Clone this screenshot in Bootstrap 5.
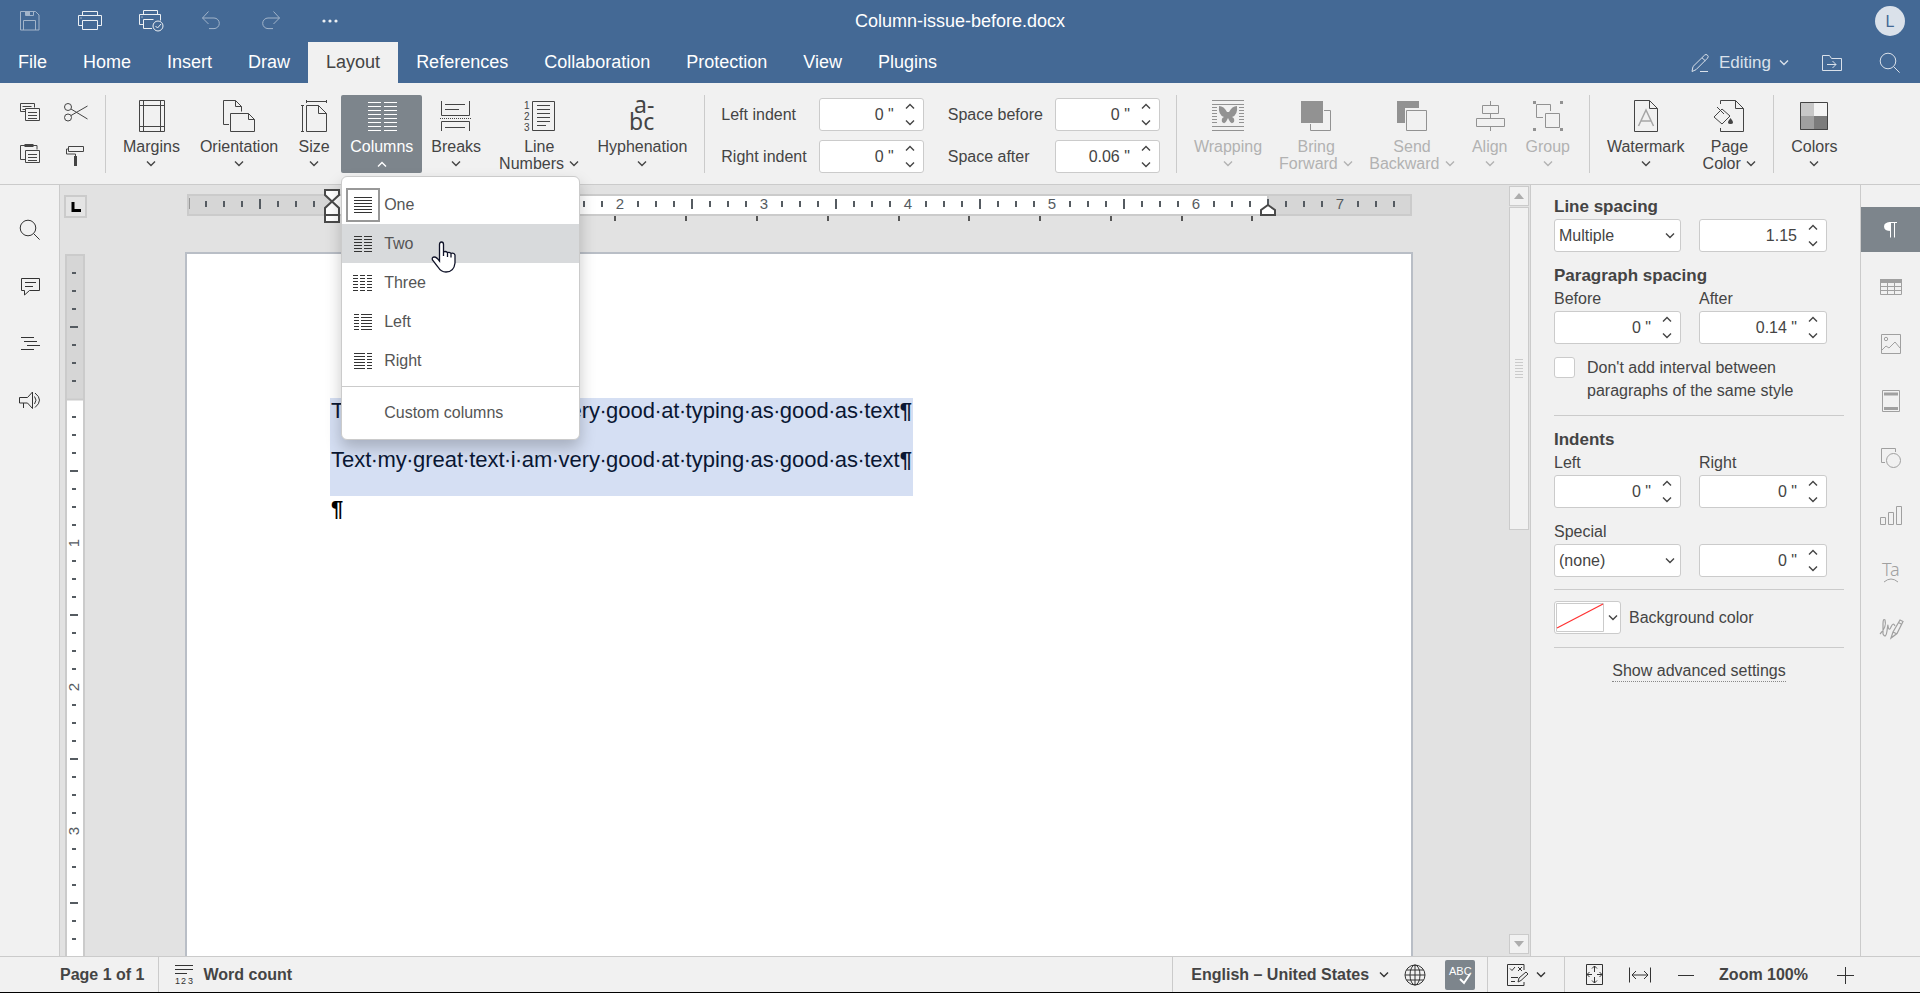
<!DOCTYPE html>
<html lang="en">
<head>
<meta charset="utf-8">
<meta name="viewport" content="width=device-width, initial-scale=1">
<title>Column-issue-before.docx</title>
<link href="https://cdn.jsdelivr.net/npm/bootstrap@5.3.0/dist/css/bootstrap.min.css" rel="stylesheet">
<style>
:root{--head:#446995;--bar:#f1f1f1;--line:#cbcbcb;--canvas:#e2e2e2;--on:#7d858c;--ink:#444}
body{font-family:"Liberation Sans",Arial,sans-serif;font-size:16px;line-height:17px;color:var(--ink);background:var(--bar)}
svg{display:block;flex:none;fill:none;stroke:currentColor}
.solid{fill:currentColor;stroke:none}
button{color:inherit;background:none;border:0;padding:0;font:inherit}
.head{background:var(--head);color:#fff}
.head-top{height:42px;padding-left:20px}
.head-top button{width:24px;height:24px}
.head-top button:first-child{width:21px}
.quick{gap:37px}
.doc-title{font-size:18px;line-height:22px;left:0;right:0}
.avatar{width:30px;height:30px;background:#dae1ea;color:var(--head);margin-right:15px}
.tabs{height:41px;font-size:18px;line-height:22px}
.tabs a{color:#fff;padding:9px 18px 10px;text-decoration:none}
.tabs a.on{background:var(--bar);color:var(--ink)}
.head-tools{color:#dae1ea;margin-right:19px}
.mode{font-size:17px}
.ribbon{height:102px;border-bottom:1px solid var(--line);padding:12px 0 10px}
.clip{display:grid;grid-template-columns:24px 24px;grid-template-rows:24px 24px;column-gap:20px;row-gap:18px;margin:5px 17px 0 20px;align-content:start}
.vsep{width:1px;height:78px;background:var(--line);flex:none}
.tool{height:78px;padding:4px 9px 0;border-radius:2px;display:flex;flex-direction:column;align-items:center}
.tool.tight{padding:4px 8px 0}
.gapped{margin-right:2px}
.tool svg.pic{margin-bottom:5px}
.tool .chev{margin:6px auto}
.tool span .chev{display:inline-block;margin:0 0 2px 1px}
.tool.on{background:var(--on);color:#fff}
.tool:disabled{color:#b2b2b2}
.tool:disabled .pic{color:#929292}
.spins{display:grid;grid-template-columns:auto auto;gap:9px 12px;padding-top:3px;align-items:center;align-content:start}
.spin{height:33px;background:#fff;border:1px solid var(--line);border-radius:3px;display:flex;align-items:center}
.spin input{border:0;background:none;flex:1;min-width:0;width:40px;text-align:right;padding:0;color:inherit}
.spin span{display:flex;flex-direction:column;gap:11px;margin:0 8px 0 11px}
.ribbon .spin{width:105px}
.menu{top:81px;left:0;width:239px;background:#fff;border:1px solid var(--line);border-radius:6px;padding:8px 0 7px;box-shadow:0 8px 16px rgba(0,0,0,.22);z-index:5;color:#555;text-align:left}
.menu button{display:flex;align-items:center;width:100%;height:39px;padding-left:4px;position:relative}
.menu i{width:34px;height:34px;display:grid;place-items:center;margin-right:4px;color:#333}
.menu i.picked{border:2px solid #989898}
.menu .hot{background:#d8dadc}
.menu hr{margin:6px 0;border:0;border-top:1px solid var(--line);opacity:1}
.pointer{left:88px;top:16px;color:#0f1228}
.rail{padding-top:22px;gap:12px}
.rail button{height:45px;width:100%;display:grid;place-items:center}
.rail-left{width:60px;border-right:1px solid var(--line);color:#333}
.rail-right{width:60px;border-left:1px solid var(--line);color:#a0a0a0}
.rail-right .on{background:var(--on);color:#fff}
.canvas{background:var(--canvas)}
.vcol{width:29px}
.tabmark{width:23px;height:23px;border:2px solid var(--line);background:#e4e4e4;margin:10px 0 0 4px;display:grid;place-items:center;flex:none}
.vruler{width:20px;margin:36px 0 0 5px}
.hruler{margin-top:4px}
.sheet{width:1228px;background:#fff;border:2px solid #b9bec6;border-bottom:0;padding:144px 141px 144px 143px;margin-top:28px;font-size:22px;line-height:25px;color:#000}
.sheet p{margin:0;padding:0 0 24px 1px;width:583px;white-space:nowrap}
.sheet .sel{background:#d5dff3;color:#0a1733}
.scroll{width:21px;padding:1px 0 2px}
.scroll button{width:20px;height:20px;border:1px solid var(--line);background:var(--bar);display:grid;place-items:center;color:#adadad}
.thumb{width:20px;height:323px;border:1px solid var(--line);background:var(--bar);margin-top:1px;display:grid;place-items:center;color:var(--line)}
.panel{width:330px;border-left:1px solid var(--line);padding:11px 16px 0 23px}
.panel b{display:block;font-size:17px;line-height:22px}
.first-row{padding:1px 0 13px}
.pair{display:grid;grid-template-columns:127px 128px;column-gap:18px;align-items:center}
.pair label{line-height:24px}
.pick{height:33px;border:1px solid var(--line);border-radius:3px;appearance:none;color:inherit;padding:0 4px;background:#fff url("data:image/svg+xml,%3Csvg xmlns='http://www.w3.org/2000/svg' width='10' height='6' fill='none' stroke='%23444' stroke-width='1.4'%3E%3Cpath d='M1 .6l4 4 4-4'/%3E%3C/svg%3E") no-repeat right 5px center}
.panel hr{margin:0;border:0;border-top:1px solid var(--line);opacity:1}
.tick{appearance:none;width:21px;height:21px;border:1px solid var(--line);border-radius:3px;background:#fff;margin:1px 12px 0 0;flex:none}
.same-style{padding:12px 0 13px}
.same-style label{line-height:23px}
.gap-top{padding-top:13px}
.special{padding:12px 0}
.bgrow{padding:11px 0 13px}
.swatch{width:67px;height:33px;border:1px solid var(--line);border-radius:3px;background:#fff;display:flex;align-items:center;gap:4px;padding-left:1px}
.more{color:inherit;text-decoration:none;border-bottom:1px dotted #888;padding-bottom:2px;line-height:22px}
.status{height:37px;border-top:1px solid var(--line);border-bottom:1px solid #000;font-weight:700;color:var(--ink)}
.status svg{color:#333}
.cell{border-right:1px solid var(--line);display:flex;align-items:center}
.spell{width:30px;height:30px;background:var(--on);border-radius:2px;display:grid;place-items:center}
.spell svg{color:#fff}
.page-no{padding:0 14px 0 60px}
.langs{padding:0 12px 0 18px;gap:15px}
.langs button:first-child{gap:10px}
.track{padding:0 18px;gap:8px}
.zooms{padding:0 65px 0 21px;gap:25px}
</style>
</head>
<body class="vh-100 d-flex flex-column overflow-hidden">
<svg width="0" height="0" class="position-absolute" aria-hidden="true">
  <symbol id="dn" viewBox="0 0 10 6"><path d="M1 .6l4 4 4-4" stroke-width="1.4"/></symbol>
  <symbol id="up" viewBox="0 0 10 6"><path d="M1 5.4l4-4 4 4" stroke-width="1.4"/></symbol>
  <symbol id="lens" viewBox="0 0 22 22"><circle cx="9" cy="9" r="7.8"/><path d="M14.6 14.6l6 6"/></symbol>
</svg>

<header class="head">
  <div class="head-top d-flex align-items-center justify-content-between position-relative">
    <div class="quick d-flex">
      <button aria-label="Save"><svg width="20" height="20" opacity=".5"><path d="M.5.5h15l3.500 3.500v15H.5zM5.500.5v4h8v-4M3.500 19v-9.500h12V19"/><path d="M6 1h4v3H6z" class="solid"/></svg></button>
      <button aria-label="Print"><svg width="24" height="20" opacity=".9"><path d="M4.500 4.500v-4h15v4M4.500 14.500h-4v-10h23v10h-4M4.500 9.500h15v9h-15zM2.500 7h1"/></svg></button>
      <button aria-label="Quick print"><svg width="25" height="22" opacity=".9"><path d="M4.500 4.500v-4h14v4M4.500 14.500h-4v-10h21v6M13 18.500H4.500v-9h10"/><circle cx="19" cy="16" r="5"/><path d="M16.500 16l2 2 3.500-4M2.500 7h1"/></svg></button>
      <button aria-label="Undo"><svg width="20" height="20" opacity=".5"><path d="M8.500.5L2.500 7l6 6M2.500 7H14a5.300 5.300 0 010 10.600H9"/></svg></button>
      <button aria-label="Redo"><svg width="20" height="20" opacity=".5"><path d="M12.500.5l6 6.500-6 6M18.500 7H7a5.300 5.300 0 000 10.600h5"/></svg></button>
      <button aria-label="More"><svg width="20" height="20" opacity=".9"><g class="solid"><circle cx="2" cy="10" r="1.600"/><circle cx="8" cy="10" r="1.600"/><circle cx="14" cy="10" r="1.600"/></g></svg></button>
    </div>
    <div class="doc-title position-absolute text-center pe-none">Column-issue-before.docx</div>
    <div class="avatar rounded-circle d-grid align-content-center text-center">L</div>
  </div>
  <div class="tabs d-flex">
    <nav class="d-flex me-auto">
      <a href="#">File</a><a href="#">Home</a><a href="#">Insert</a><a href="#">Draw</a><a href="#" class="on">Layout</a><a href="#">References</a><a href="#">Collaboration</a><a href="#">Protection</a><a href="#">View</a><a href="#">Plugins</a>
    </nav>
    <div class="head-tools d-flex align-items-center">
      <button class="d-flex align-items-center"><svg width="20" height="20" class="me-2"><path d="M1 18.500l1-5L13.500 2.200q1.500-1.500 3 0t0 3L5 16.700zM11 4.800l3.300 3M9 18.500h8"/></svg><span class="mode">Editing</span><svg width="10" height="6" class="ms-2"><use href="#dn"/></svg></button>
      <button aria-label="Open file location" class="mx-4 px-2"><svg width="22" height="18"><path d="M1.500 1.500h7l2 3h10v12h-19zM6 10.500h9M11.500 7l3.500 3.500-3.500 3.500"/></svg></button>
      <button aria-label="Search" class="ms-1"><svg width="22" height="22"><use href="#lens"/></svg></button>
    </div>
  </div>
</header>

<div class="ribbon d-flex">
  <div class="clip">
    <button aria-label="Copy"><svg width="24" height="24"><path d="M5 11.500H.5V3.500h14v4M2.500 6.500h9M2.500 9.500h3M5.500 8.500h14v12h-14zM8 12.500h9M8 15.500h9M8 18.500h9"/></svg></button>
    <button aria-label="Cut"><svg width="24" height="24"><circle cx="4" cy="7" r="3.500"/><circle cx="4" cy="17.500" r="3.500"/><path d="M7 9l16.500 10M7 15.500L23.500 6"/></svg></button>
    <button aria-label="Paste"><svg width="24" height="24"><path d="M5 17.500H.5V3.500h16.500v4M5.500 8.500h14v12h-14zM8 12.500h9M8 15.500h9M8 18.500h9"/><path d="M4.500 3.500h9" stroke-width="3"/></svg></button>
    <button aria-label="Copy style"><svg width="24" height="24"><path d="M4.500 4.500h15v5h-15zM4.500 7H2.500v5h9v2"/><path d="M11.500 14v10" stroke-width="3"/></svg></button>
  </div>
  <div class="vsep me-2"></div>
  <button class="tool gapped"><svg class="pic" width="32" height="34"><path d="M4.500 1.500h25v31h-25zM8.500 1.500v31M25.500 1.500v31M4.500 6.500h25M4.500 27.500h25"/></svg>Margins<svg class="chev" width="10" height="6"><use href="#dn"/></svg></button>
  <button class="tool gapped"><svg class="pic" width="34" height="34"><path d="M7 25.500H1.500v-24h12l6 6v5M13.500 1.500v6h6M8.500 14.500h18l6 6v12h-24zM26.500 14.500v6h6"/></svg>Orientation<svg class="chev" width="10" height="6"><use href="#dn"/></svg></button>
  <button class="tool gapped"><svg class="pic" width="32" height="34"><path d="M8.500 6.500h12l8 8v18h-20zM20.500 6.500v8h8M8.500 2.500h20M8.500 1v3M28.500 1v3M4.500 6.500v26M3 6.500h3M3 32.500h3"/></svg>Size<svg class="chev" width="10" height="6"><use href="#dn"/></svg></button>
  <div class="position-relative">
    <button class="tool on" aria-expanded="true"><svg class="pic" width="32" height="34"><path d="M2 3.500h13m3 0h13M2 7.500h13m3 0h13M2 11.500h13m3 0h13M2 15.500h13m3 0h13M2 19.500h13m3 0h13M2 23.500h13m3 0h13M2 27.500h13m3 0h13M2 31.500h13m3 0h13"/></svg>Columns<svg class="chev" width="10" height="6"><use href="#up"/></svg></button>
    <div class="menu position-absolute">
      <button><i class="picked"><svg width="20" height="20"><path d="M1 2.500h18M1 5.500h18M1 8.500h18M1 11.500h18M1 14.500h18M1 17.500h18"/></svg></i>One</button>
      <button class="hot"><i><svg width="20" height="20"><path d="M1 2.500h8m2 0h8M1 5.500h8m2 0h8M1 8.500h8m2 0h8M1 11.500h8m2 0h8M1 14.500h8m2 0h8M1 17.500h8m2 0h8"/></svg></i>Two
        <svg class="pointer position-absolute" width="28" height="34"><path fill="#fff" stroke-width="1.300" d="M9.500 18V4.500q0-2.500 2-2.500t2 2.500V12q2-1.200 4 .6 2-.8 3.500.8 3-.8 4 1.600V23q-1 9-9 9-5 0-8-5l-5.500-7q-1-3 2-3 2 0 5 4zM13.500 11v5M17.500 12.600v4.400M21 13.400v4"/></svg></button>
      <button><i><svg width="20" height="20"><path d="M0 2.500h5m2 0h5m2 0h5M0 5.500h5m2 0h5m2 0h5M0 8.500h5m2 0h5m2 0h5M0 11.500h5m2 0h5m2 0h5M0 14.500h5m2 0h5m2 0h5M0 17.500h5m2 0h5m2 0h5"/></svg></i>Three</button>
      <button><i><svg width="20" height="20"><path d="M1 2.500h5m2 0h11M1 5.500h5m2 0h11M1 8.500h5m2 0h11M1 11.500h5m2 0h11M1 14.500h5m2 0h11M1 17.500h5m2 0h11"/></svg></i>Left</button>
      <button><i><svg width="20" height="20"><path d="M1 2.500h11m2 0h5M1 5.500h11m2 0h5M1 8.500h11m2 0h5M1 11.500h11m2 0h5M1 14.500h11m2 0h5M1 17.500h11m2 0h5"/></svg></i>Right</button>
      <hr>
      <button><i></i>Custom columns</button>
    </div>
  </div>
  <button class="tool"><svg class="pic" width="32" height="34"><path d="M1.500 2v14.500h28V2M5 5.500h20M5 10.500h14M1.500 32v-9.500h28V32M5 28.500h20"/><path d="M0 19.500h32" stroke-dasharray="1 1"/></svg>Breaks<svg class="chev" width="10" height="6"><use href="#dn"/></svg></button>
  <button class="tool"><svg class="pic" width="32" height="34"><path d="M9.500 2.500h22v29h-22zM14 6.500h13M14 10.500h13M14 14.500h13M14 18.500h13M14 22.500h13M14 26.500h9"/><g class="solid" font-size="10"><text x="1" y="10">1</text><text x="1" y="21">2</text><text x="1" y="32">3</text></g></svg>Line<span>Numbers <svg class="chev" width="10" height="6"><use href="#dn"/></svg></span></button>
  <button class="tool"><svg class="pic" width="32" height="34"><g class="solid" font-family="Noto Sans, sans-serif" font-size="23"><text x="8" y="14">a-</text><text x="3" y="31">bc</text></g></svg>Hyphenation<svg class="chev" width="10" height="6"><use href="#dn"/></svg></button>
  <div class="vsep mx-2"></div>
  <div class="spins ms-2">
    <label for="li">Left indent</label><div class="spin"><input id="li" value='0 "'><span><svg width="10" height="6"><use href="#up"/></svg><svg width="10" height="6"><use href="#dn"/></svg></span></div>
    <label for="ri">Right indent</label><div class="spin"><input id="ri" value='0 "'><span><svg width="10" height="6"><use href="#up"/></svg><svg width="10" height="6"><use href="#dn"/></svg></span></div>
  </div>
  <div class="spins ms-4 me-3">
    <label for="sb">Space before</label><div class="spin"><input id="sb" value='0 "'><span><svg width="10" height="6"><use href="#up"/></svg><svg width="10" height="6"><use href="#dn"/></svg></span></div>
    <label for="sa">Space after</label><div class="spin"><input id="sa" value='0.06 "'><span><svg width="10" height="6"><use href="#up"/></svg><svg width="10" height="6"><use href="#dn"/></svg></span></div>
  </div>
  <div class="vsep me-2"></div>
  <button class="tool" disabled><svg class="pic" width="32" height="34"><path d="M0 1.500h32M0 5.500h32M0 27.500h32M0 31.500h32M0 8.500h5m22 0h5M0 11.500h5m22 0h5M0 14.500h5m22 0h5M0 17.500h5m22 0h5M0 20.500h5m22 0h5M0 23.500h5m22 0h5"/><path class="solid" d="M7 7q5 0 8 6h2q3-6 8-6 1 9-5 11 3 1 2 5-3 3-5-2l-1-2-1 2q-2 5-5 2-1-4 2-5-6-2-5-11z"/></svg>Wrapping<svg class="chev" width="10" height="6"><use href="#dn"/></svg></button>
  <button class="tool tight" disabled><svg class="pic" width="32" height="34"><path class="solid" d="M1 2h22v22H1z"/><path d="M24 11.500h6.500v20h-20V25"/></svg>Bring<span>Forward <svg class="chev" width="10" height="6"><use href="#dn"/></svg></span></button>
  <button class="tool tight" disabled><svg class="pic" width="32" height="34"><path class="solid" d="M1 2h22v7H9v15H1z"/><path d="M10.500 11.500h20v20h-20z"/></svg>Send<span>Backward <svg class="chev" width="10" height="6"><use href="#dn"/></svg></span></button>
  <button class="tool" disabled><svg class="pic" width="32" height="34"><path d="M16.500 2v4.500M16.500 14v5M16.500 27v5M8.500 6.500h16v8h-16zM2.500 19.500h28v8h-28z"/></svg>Align<svg class="chev" width="10" height="6"><use href="#dn"/></svg></button>
  <button class="tool gapped" disabled><svg class="pic" width="32" height="34"><path d="M11 18.500H4.500v-13h14V12M13.500 14.500h14v14h-14z"/><path class="solid" d="M1 2h3v3H1zM28 2h3v3h-3zM1 29h3v3H1zM28 29h3v3h-3z"/></svg>Group<svg class="chev" width="10" height="6"><use href="#dn"/></svg></button>
  <div class="vsep mx-2"></div>
  <button class="tool"><svg class="pic" width="32" height="34"><path d="M4.500 1.500h15l8 8v23h-23zM19.500 1.500v8h8"/><path d="M8.500 27l7.500-16 7.500 16M11 22h10" stroke="#a6a6a6" stroke-width="1.500"/></svg>Watermark<svg class="chev" width="10" height="6"><use href="#dn"/></svg></button>
  <button class="tool"><svg class="pic" width="32" height="34"><path d="M7.500 5V1.500h15l8 8v23h-23V29M22.500 1.500v8h8M1 18l8-8 8 7-8 8zM4 8l7 7"/><path class="solid" d="M17.500 19q5 6 0 6t0-6z"/></svg>Page<span>Color <svg class="chev" width="10" height="6"><use href="#dn"/></svg></span></button>
  <div class="vsep mx-2"></div>
  <button class="tool"><svg class="pic" width="32" height="34"><g stroke="none"><path fill="#c8c8c8" d="M2 3h14v14H2z"/><path fill="#f4f4f4" d="M16 3h14v14H16z"/><path fill="#a0a0a0" d="M2 17h14v14H2z"/><path fill="#7c7c7c" d="M16 17h14v14H16z"/></g><path d="M2.500 3.500h27v27h-27z"/></svg>Colors<svg class="chev" width="10" height="6"><use href="#dn"/></svg></button>
</div>

<main class="flex-grow-1 d-flex overflow-hidden">
  <aside class="rail rail-left d-flex flex-column flex-shrink-0">
    <button aria-label="Find"><svg width="22" height="22"><use href="#lens"/></svg></button>
    <button aria-label="Comments"><svg width="22" height="20"><path d="M2.500 1.500h18v12h-10L5.500 18v-4.500h-3zM6 5.500h11M6 9.500h8"/></svg></button>
    <button aria-label="Headings"><svg width="22" height="14"><path d="M2 .5h13M5 4.500h13M8 8.500h13M2 12.500h13"/></svg></button>
    <button aria-label="Feedback"><svg width="22" height="20"><path d="M.5 6.500h8l5-5.500v16.500l-5-5.500h-8zM4.500 12v5M15.500 5.500q3 3.500 0 7.500M16 2q9 7 0 14.500"/></svg></button>
  </aside>

  <div class="canvas flex-grow-1 d-flex overflow-hidden">
    <div class="vcol d-flex flex-column flex-shrink-0">
      <button class="tabmark" aria-label="Tab stop"><svg width="10" height="10"><path d="M2 0v8.500h8" stroke="#000" stroke-width="3"/></svg></button>
      <svg class="vruler flex-grow-1" height="100">
        <defs><pattern id="vt" width="20" height="144" y="1" patternUnits="userSpaceOnUse"><path stroke="#555b61" stroke-width="2" d="M7 18h4M7 36h4M7 54h4M5 72h8M7 90h4M7 108h4M7 126h4"/></pattern></defs>
        <path fill="#d6d6d6" stroke="none" d="M0 0h20v146H0z"/><path stroke="none" fill="#fff" d="M0 146h20v900H0z"/>
        <path d="M1 1000V1h18v999M2 145.500h16" stroke="#cbcbcb" stroke-width="2"/>
        <rect width="20" height="900" stroke="none" fill="url(#vt)"/>
        <g stroke="none" fill="#555b61" font-size="15" text-anchor="middle"><text transform="translate(14 289) rotate(-90)">1</text><text transform="translate(14 433) rotate(-90)">2</text><text transform="translate(14 577) rotate(-90)">3</text></g>
      </svg>
    </div>
    <div class="flex-grow-1 d-flex flex-column align-items-center overflow-hidden">
      <svg class="hruler" width="1228" height="35">
        <defs><pattern id="ht" width="144" height="35" x="3" patternUnits="userSpaceOnUse"><path stroke="#555b61" stroke-width="2" d="M18 12v6M36 12v6M54 12v6M72 10v10M90 12v6M108 12v6M126 12v6"/></pattern></defs>
        <path stroke="none" fill="#d6d6d6" d="M2 5h1225v22H2z"/><path stroke="none" fill="#fff" d="M147 5h936v22H147z"/>
        <path d="M3 6h1223v20H3zM1083 7v18" stroke="#cbcbcb" stroke-width="2"/>
        <rect x="4" width="1220" height="35" stroke="none" fill="url(#ht)"/>
        <path d="M4.500 9v11" stroke="#999"/>
        <g stroke="none" fill="#555b61" font-size="15" text-anchor="middle"><text x="435" y="20">2</text><text x="579" y="20">3</text><text x="723" y="20">4</text><text x="867" y="20">5</text><text x="1011" y="20">6</text><text x="1155" y="20">7</text></g>
        <path stroke="#555" stroke-width="2" d="M218 27v5M289 27v5M360 27v5M430 27v5M501 27v5M572 27v5M643 27v5M714 27v5M784 27v5M855 27v5M926 27v5M997 27v5M1067 27v5"/>
        <path stroke="#4a4a4a" stroke-width="2" fill="#fff" d="M140 1h14v5l-14 13v14h14V19L140 6zM140 26h14M1076 26v-5l7-5 7 5v5z"/>
      </svg>
      <article class="sheet flex-grow-1 flex-shrink-0">
        <p class="sel">Text∙my∙great∙text∙i∙am∙very∙good∙at∙typing∙as∙good∙as∙text<b>¶</b></p>
        <p class="sel">Text∙my∙great∙text∙i∙am∙very∙good∙at∙typing∙as∙good∙as∙text<b>¶</b></p>
        <p><b>¶</b></p>
      </article>
    </div>
    <div class="scroll d-flex flex-column flex-shrink-0">
      <button aria-label="Scroll up"><svg width="10" height="6"><path class="solid" d="M0 6l5-6 5 6z"/></svg></button>
      <div class="thumb"><svg width="8" height="20"><path d="M0 .5h8M0 3.500h8M0 6.500h8M0 9.500h8M0 12.500h8M0 15.500h8M0 18.500h8"/></svg></div>
      <button aria-label="Scroll down" class="mt-auto"><svg width="10" height="6"><path class="solid" d="M0 0l5 6 5-6z"/></svg></button>
    </div>
  </div>

  <section class="panel flex-shrink-0">
    <b>Line spacing</b>
    <div class="pair first-row">
      <select class="pick" aria-label="Line spacing"><option>Multiple</option></select>
      <div class="spin"><input aria-label="Spacing value" value="1.15"><span><svg width="10" height="6"><use href="#up"/></svg><svg width="10" height="6"><use href="#dn"/></svg></span></div>
    </div>
    <b>Paragraph spacing</b>
    <div class="pair">
      <label for="pb">Before</label><label for="pa">After</label>
      <div class="spin"><input id="pb" value='0 "'><span><svg width="10" height="6"><use href="#up"/></svg><svg width="10" height="6"><use href="#dn"/></svg></span></div>
      <div class="spin"><input id="pa" value='0.14 "'><span><svg width="10" height="6"><use href="#up"/></svg><svg width="10" height="6"><use href="#dn"/></svg></span></div>
    </div>
    <div class="d-flex same-style"><input type="checkbox" class="tick" id="same"><label for="same">Don't add interval between<br>paragraphs of the same style</label></div>
    <hr>
    <b class="gap-top">Indents</b>
    <div class="pair">
      <label for="il">Left</label><label for="ir">Right</label>
      <div class="spin"><input id="il" value='0 "'><span><svg width="10" height="6"><use href="#up"/></svg><svg width="10" height="6"><use href="#dn"/></svg></span></div>
      <div class="spin"><input id="ir" value='0 "'><span><svg width="10" height="6"><use href="#up"/></svg><svg width="10" height="6"><use href="#dn"/></svg></span></div>
    </div>
    <div class="pair special">
      <label for="sp">Special</label><span></span>
      <select class="pick" id="sp"><option>(none)</option></select>
      <div class="spin"><input aria-label="Special value" value='0 "'><span><svg width="10" height="6"><use href="#up"/></svg><svg width="10" height="6"><use href="#dn"/></svg></span></div>
    </div>
    <hr>
    <div class="d-flex align-items-center bgrow"><button class="swatch me-2" id="bg" aria-label="Background color"><svg width="48" height="29"><path d="M.5.5h47v28H.5z" stroke="#cbcbcb"/><path d="M1 25L47 1" stroke="#f33" stroke-width="1.300"/></svg><svg width="10" height="6"><use href="#dn"/></svg></button><label for="bg">Background color</label></div>
    <hr>
    <div class="text-center pt-2 mt-1"><a href="#" class="more">Show advanced settings</a></div>
  </section>

  <aside class="rail rail-right d-flex flex-column flex-shrink-0">
    <button class="on" aria-label="Paragraph settings"><svg width="14" height="18"><path d="M6.500 1.500v15M10.500 1.500v15M5 1.500h8"/><path class="solid" d="M7 1v9Q0 10 0 5.500T7 1z"/></svg></button>
    <button aria-label="Table settings"><svg width="24" height="18"><path d="M1.500 1.500h21v15h-21zM1.500 8.500h21M1.500 12.500h21M8.500 4v12M15.500 4v12"/><path d="M1 3h22" stroke-width="4"/></svg></button>
    <button aria-label="Image settings"><svg width="22" height="22"><path d="M1.500 1.500h19v19h-19zM2 17l4-4 3 2 6-6 5 6"/><circle cx="6" cy="6" r="1.700"/></svg></button>
    <button aria-label="Header and footer settings"><svg width="20" height="22"><path d="M1.500.5h17v21h-17z"/><path d="M3 4h14M3 18.500h14" stroke-width="3"/></svg></button>
    <button aria-label="Shape settings"><svg width="22" height="22"><path d="M5 15.500H1.500v-14h14V5"/><circle cx="13.500" cy="13.500" r="7"/></svg></button>
    <button aria-label="Chart settings"><svg width="24" height="20"><path d="M1.500 12.500h5v7h-5zM9.500 7.500h5v12h-5zM17.500 1.500h5v18h-5z"/></svg></button>
    <button aria-label="Text art settings"><svg width="22" height="24"><g class="solid" font-family="Noto Sans, sans-serif" font-weight="300" font-size="18"><text x="2" y="16">Ta</text></g><path d="M4 22q7-6 14 0"/></svg></button>
    <button aria-label="Signature settings"><svg width="26" height="24"><path d="M2 17q7-7 5-14-2-2-2 4t0 10q3 5 4-3t1-5q1 6 3 1t4-1M13 21l2-6 7-12 3 1.500-6 12zM15 15l4 2M20.500 5.500l3.500 2" stroke-width="1.200"/></svg></button>
  </aside>
</main>

<footer class="status d-flex">
  <div class="cell page-no">Page 1 of 1</div>
  <button class="cell border-0 ps-3"><svg width="20" height="22" class="me-2"><path d="M0 1.500h18M0 5.500h18M0 9.500h12"/><g class="solid" font-size="9" font-weight="400"><text x="0" y="20">1</text><text x="6" y="20">2</text><text x="13" y="20">3</text></g></svg><span>Word count</span></button>
  <div class="cell flex-grow-1"></div>
  <div class="cell langs">
    <button class="d-flex align-items-center fw-bold">English – United States<svg width="10" height="6"><use href="#dn"/></svg></button>
    <button aria-label="Document language"><svg width="22" height="22"><circle cx="11" cy="11" r="10"/><ellipse cx="11" cy="11" rx="5" ry="10"/><path d="M11 1v20M1 11h20M2.500 6h17M2.500 16h17"/></svg></button>
    <button class="spell ms-1" aria-label="Spell checking"><svg width="26" height="22"><g class="solid" font-size="11" font-weight="400"><text x="2" y="11">ABC</text></g><path d="M13 15l4 4 6-9" stroke-width="2"/></svg></button>
  </div>
  <button class="cell track"><svg width="22" height="24"><path d="M18 7V1.500H1.500v21H18V19M5 14.500h7M5 18.500h4M4 5.500l2 2 3-3.500M12 4l4 4M16 4l-4 4M12 19l1-4 7-6 2 2-7 6.500z"/></svg><svg width="10" height="6"><use href="#dn"/></svg></button>
  <div class="d-flex align-items-center zooms">
    <button aria-label="Fit to page"><svg width="18" height="22"><path d="M.5.500h16v20H.5zM8.500 2v6M6 4.500L8.500 2 11 4.500M8.500 19v-6M6 16.500L8.500 19l2.500-2.500M1 10.500h5M3.500 8L1 10.500 3.500 13M16 10.500h-5M13.500 8l2.500 2.500-2.500 2.500"/></svg></button>
    <button aria-label="Fit to width" class="gapped"><svg width="22" height="16"><path d="M.5.500v15M21.500.500v15M3 8h16M7 4L3 8l4 4M15 4l4 4-4 4"/></svg></button>
    <button aria-label="Zoom out"><svg width="16" height="16"><path d="M0 8.500h16"/></svg></button>
    <span>Zoom 100%</span>
    <button aria-label="Zoom in" class="ms-1"><svg width="18" height="18"><path d="M0 9.500h17M8.500 1v17"/></svg></button>
  </div>
</footer>
<script src="https://cdn.jsdelivr.net/npm/bootstrap@5.3.0/dist/js/bootstrap.bundle.min.js"></script>
</body>
</html>
